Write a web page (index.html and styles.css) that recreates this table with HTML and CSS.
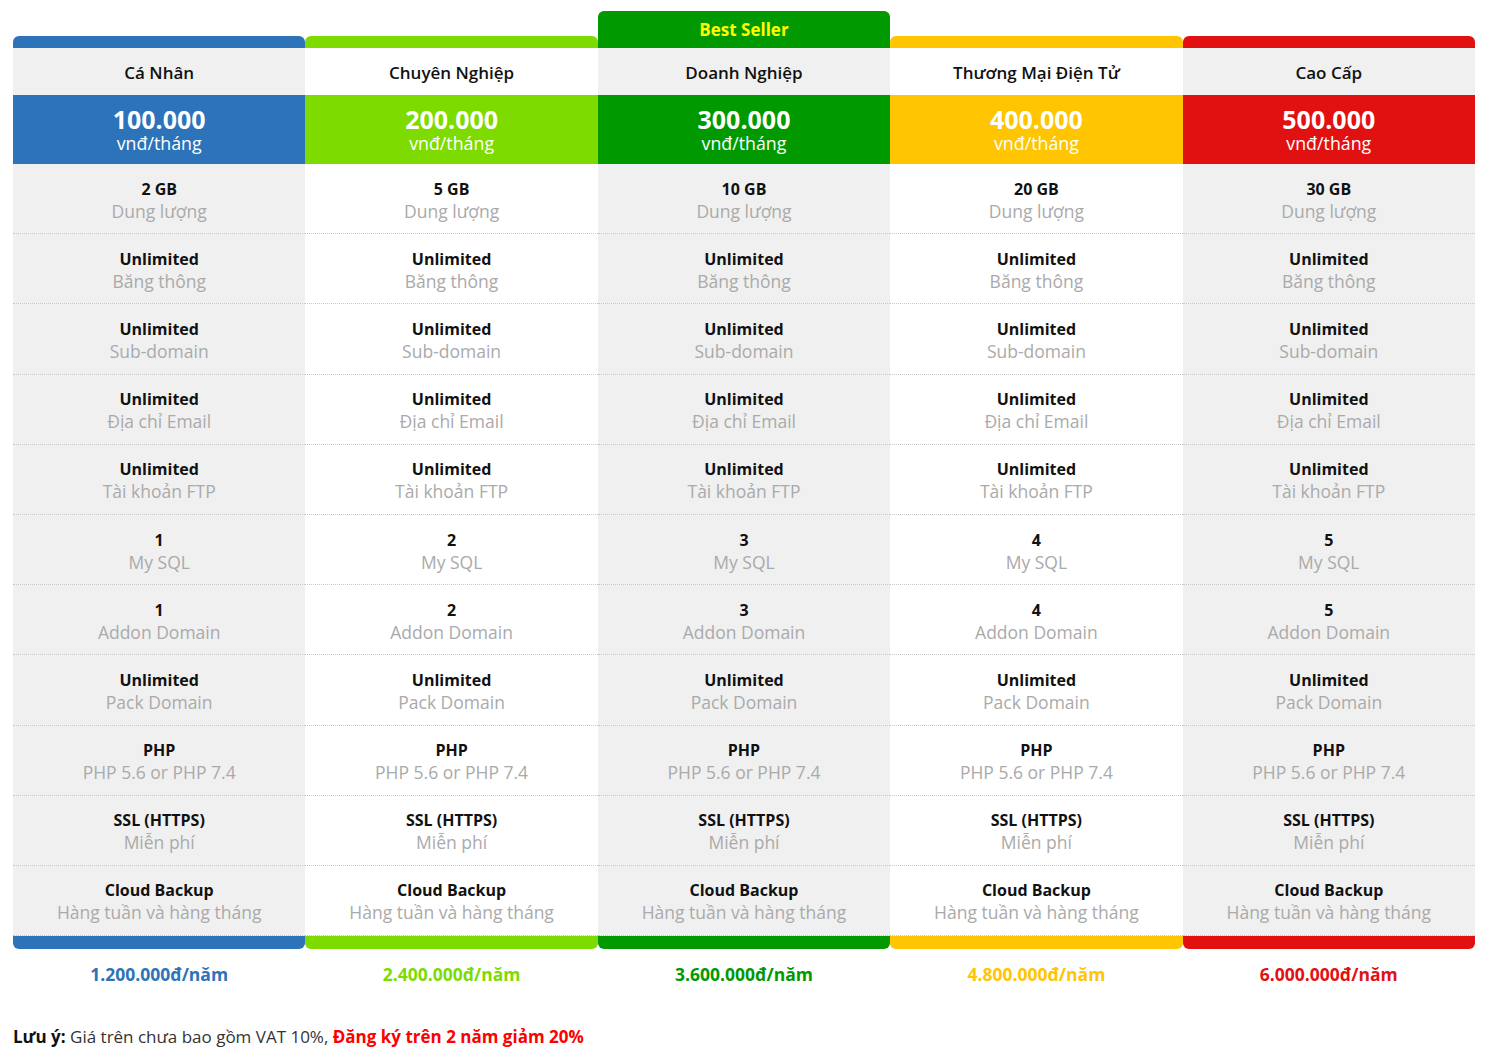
FILE: index.html
```html
<!DOCTYPE html>
<html lang="vi">
<head>
<meta charset="utf-8">
<title>Bảng giá hosting</title>
<link rel="stylesheet" href="styles.css">
</head>
<body>
<div class="wrap">
  <div class="table">
    <div class="col c-blue odd">
      <div class="cap"><div class="cap-bar"></div></div>
      <div class="name">Cá Nhân</div>
      <div class="price"><div class="num">100.000</div><div class="unit">vnđ/tháng</div></div>
      <div class="feat"><b>2 GB</b><span>Dung lượng</span></div>
      <div class="feat"><b>Unlimited</b><span>Băng thông</span></div>
      <div class="feat"><b>Unlimited</b><span>Sub-domain</span></div>
      <div class="feat"><b>Unlimited</b><span>Địa chỉ Email</span></div>
      <div class="feat"><b>Unlimited</b><span>Tài khoản FTP</span></div>
      <div class="feat"><b>1</b><span>My SQL</span></div>
      <div class="feat"><b>1</b><span>Addon Domain</span></div>
      <div class="feat"><b>Unlimited</b><span>Pack Domain</span></div>
      <div class="feat"><b>PHP</b><span>PHP 5.6 or PHP 7.4</span></div>
      <div class="feat"><b>SSL (HTTPS)</b><span>Miễn phí</span></div>
      <div class="feat"><b>Cloud Backup</b><span>Hàng tuần và hàng tháng</span></div>
      <div class="foot"></div>
      <div class="year">1.200.000đ/năm</div>
    </div>
    <div class="col c-lime even">
      <div class="cap"><div class="cap-bar"></div></div>
      <div class="name">Chuyên Nghiệp</div>
      <div class="price"><div class="num">200.000</div><div class="unit">vnđ/tháng</div></div>
      <div class="feat"><b>5 GB</b><span>Dung lượng</span></div>
      <div class="feat"><b>Unlimited</b><span>Băng thông</span></div>
      <div class="feat"><b>Unlimited</b><span>Sub-domain</span></div>
      <div class="feat"><b>Unlimited</b><span>Địa chỉ Email</span></div>
      <div class="feat"><b>Unlimited</b><span>Tài khoản FTP</span></div>
      <div class="feat"><b>2</b><span>My SQL</span></div>
      <div class="feat"><b>2</b><span>Addon Domain</span></div>
      <div class="feat"><b>Unlimited</b><span>Pack Domain</span></div>
      <div class="feat"><b>PHP</b><span>PHP 5.6 or PHP 7.4</span></div>
      <div class="feat"><b>SSL (HTTPS)</b><span>Miễn phí</span></div>
      <div class="feat"><b>Cloud Backup</b><span>Hàng tuần và hàng tháng</span></div>
      <div class="foot"></div>
      <div class="year">2.400.000đ/năm</div>
    </div>
    <div class="col c-green odd">
      <div class="cap"><div class="cap-best">Best Seller</div></div>
      <div class="name">Doanh Nghiệp</div>
      <div class="price"><div class="num">300.000</div><div class="unit">vnđ/tháng</div></div>
      <div class="feat"><b>10 GB</b><span>Dung lượng</span></div>
      <div class="feat"><b>Unlimited</b><span>Băng thông</span></div>
      <div class="feat"><b>Unlimited</b><span>Sub-domain</span></div>
      <div class="feat"><b>Unlimited</b><span>Địa chỉ Email</span></div>
      <div class="feat"><b>Unlimited</b><span>Tài khoản FTP</span></div>
      <div class="feat"><b>3</b><span>My SQL</span></div>
      <div class="feat"><b>3</b><span>Addon Domain</span></div>
      <div class="feat"><b>Unlimited</b><span>Pack Domain</span></div>
      <div class="feat"><b>PHP</b><span>PHP 5.6 or PHP 7.4</span></div>
      <div class="feat"><b>SSL (HTTPS)</b><span>Miễn phí</span></div>
      <div class="feat"><b>Cloud Backup</b><span>Hàng tuần và hàng tháng</span></div>
      <div class="foot"></div>
      <div class="year">3.600.000đ/năm</div>
    </div>
    <div class="col c-yellow even">
      <div class="cap"><div class="cap-bar"></div></div>
      <div class="name">Thương Mại Điện Tử</div>
      <div class="price"><div class="num">400.000</div><div class="unit">vnđ/tháng</div></div>
      <div class="feat"><b>20 GB</b><span>Dung lượng</span></div>
      <div class="feat"><b>Unlimited</b><span>Băng thông</span></div>
      <div class="feat"><b>Unlimited</b><span>Sub-domain</span></div>
      <div class="feat"><b>Unlimited</b><span>Địa chỉ Email</span></div>
      <div class="feat"><b>Unlimited</b><span>Tài khoản FTP</span></div>
      <div class="feat"><b>4</b><span>My SQL</span></div>
      <div class="feat"><b>4</b><span>Addon Domain</span></div>
      <div class="feat"><b>Unlimited</b><span>Pack Domain</span></div>
      <div class="feat"><b>PHP</b><span>PHP 5.6 or PHP 7.4</span></div>
      <div class="feat"><b>SSL (HTTPS)</b><span>Miễn phí</span></div>
      <div class="feat"><b>Cloud Backup</b><span>Hàng tuần và hàng tháng</span></div>
      <div class="foot"></div>
      <div class="year">4.800.000đ/năm</div>
    </div>
    <div class="col c-red odd">
      <div class="cap"><div class="cap-bar"></div></div>
      <div class="name">Cao Cấp</div>
      <div class="price"><div class="num">500.000</div><div class="unit">vnđ/tháng</div></div>
      <div class="feat"><b>30 GB</b><span>Dung lượng</span></div>
      <div class="feat"><b>Unlimited</b><span>Băng thông</span></div>
      <div class="feat"><b>Unlimited</b><span>Sub-domain</span></div>
      <div class="feat"><b>Unlimited</b><span>Địa chỉ Email</span></div>
      <div class="feat"><b>Unlimited</b><span>Tài khoản FTP</span></div>
      <div class="feat"><b>5</b><span>My SQL</span></div>
      <div class="feat"><b>5</b><span>Addon Domain</span></div>
      <div class="feat"><b>Unlimited</b><span>Pack Domain</span></div>
      <div class="feat"><b>PHP</b><span>PHP 5.6 or PHP 7.4</span></div>
      <div class="feat"><b>SSL (HTTPS)</b><span>Miễn phí</span></div>
      <div class="feat"><b>Cloud Backup</b><span>Hàng tuần và hàng tháng</span></div>
      <div class="foot"></div>
      <div class="year">6.000.000đ/năm</div>
    </div>
  </div>
  <p class="note"><b>Lưu ý:</b> Giá trên chưa bao gồm VAT 10%, <strong>Đăng ký trên 2 năm giảm 20%</strong></p>
</div>
</body>
</html>
```

FILE: styles.css
```css
* { box-sizing: border-box; }
body {
  margin: 0;
  background: #fff;
  font-family: "Open Sans", "Lato", sans-serif;
  color: #111;
}
.wrap {
  width: 1462px;
  margin-left: 13px;
  padding-top: 11px;
}
.table {
  display: grid;
  grid-template-columns: repeat(5, 1fr);
}
.col {
  display: flex;
  flex-direction: column;
  text-align: center;
}
.cap {
  height: 37px;
  display: flex;
  flex-direction: column;
  justify-content: flex-end;
}
.cap-bar {
  height: 12px;
  border-radius: 6px 6px 0 0;
  background: var(--c);
}
.cap-best {
  height: 37px;
  border-radius: 6px 6px 0 0;
  background: var(--c);
  color: #ffff00;
  font-weight: 700;
  font-size: 17px;
  line-height: 38px;
}
.name {
  height: 47px;
  line-height: 50px;
  font-size: 17px;
  font-weight: 600;
  color: #111;
}
.price {
  height: 69px;
  background: var(--c);
  color: #fff;
  display: flex;
  flex-direction: column;
  justify-content: center;
  padding-top: 1px;
}
.num {
  font-size: 25px;
  font-weight: 700;
  line-height: 27px;
}
.unit {
  font-size: 17.8px;
  line-height: 21px;
}
.feat {
  height: 70.2px;
  border-bottom: 1px dotted #c8c8c8;
  display: flex;
  flex-direction: column;
  justify-content: center;
  padding-top: 2px;
}
.feat b {
  font-size: 16px;
  font-weight: 700;
  line-height: 22px;
  color: #111;
}
.feat span {
  font-size: 17.5px;
  font-weight: 400;
  line-height: 22px;
  color: #aaaaaa;
}
.foot {
  height: 13px;
  background: var(--c);
  border-radius: 0 0 6px 6px;
}
.year {
  margin-top: 13px;
  font-size: 17.5px;
  font-weight: 700;
  line-height: 24px;
  color: var(--c);
}
.odd .name, .odd .feat { background: #f0f0f0; }
.even .name, .even .feat { background: #fff; }
.c-blue { --c: #2c73b9; }
.c-lime { --c: #7edb00; }
.c-green { --c: #009a00; }
.c-yellow { --c: #ffc500; }
.c-red { --c: #e21111; }
.note {
  margin: 39px 0 0;
  font-size: 17px;
  line-height: 24px;
  color: #333;
}
.note b { color: #111; font-weight: 700; }
.note strong { color: #ff0000; font-weight: 700; }
```
